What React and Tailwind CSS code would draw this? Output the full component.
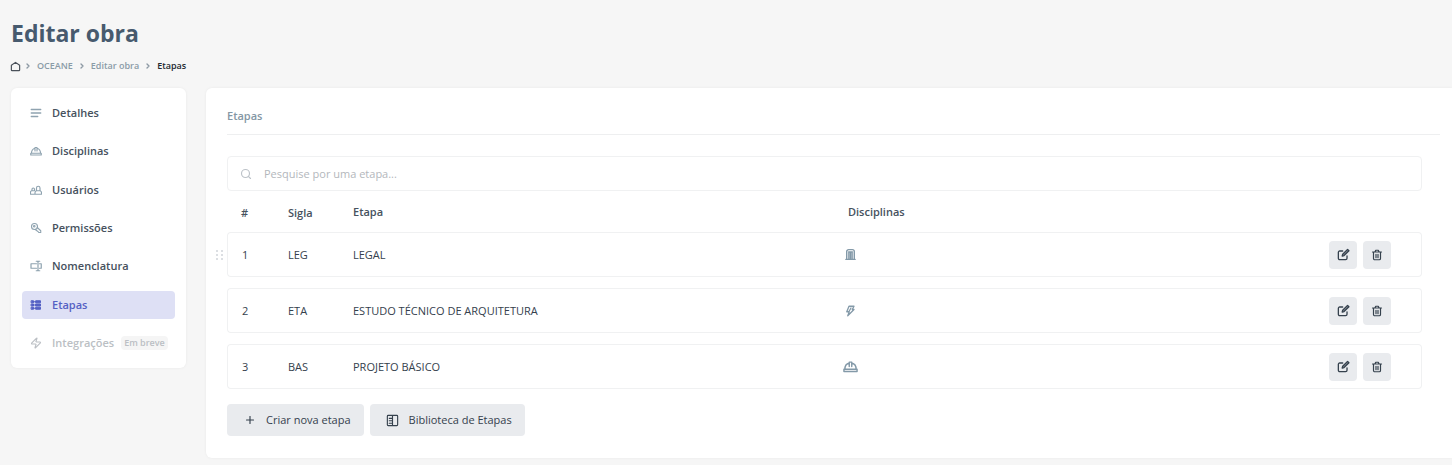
import React from "react";
import { ChevronRight, Search, Plus, Zap } from "lucide-react";

function Icon({ size = 12, width = 2, className = "", children }) {
  return (
    <svg
      width={size}
      height={size}
      viewBox="0 0 24 24"
      fill="none"
      stroke="currentColor"
      strokeWidth={width}
      strokeLinecap="round"
      strokeLinejoin="round"
      className={`shrink-0 ${className}`}
      aria-hidden="true"
    >
      {children}
    </svg>
  );
}

const HomeIcon = () => (
  <Icon size={11} width={2.6} className="text-[#4a515a]">
    <path d="M3 9.500 12 3l9 6.500v10a1.500 1.500 0 0 1-1.500 1.500h-15A1.500 1.500 0 0 1 3 19.500Z" />
  </Icon>
);

const LinesIcon = () => (
  <Icon width={2.6}>
    <path d="M2.500 5h19M2.500 12h19M2.500 19h13" />
  </Icon>
);

const HelmetIcon = ({ size = 12 }) => (
  <Icon size={size} width={2.3}>
    <path d="M1.500 16.500h21V20h-21zM3 16.500c0-5.500 3-9 7-10M21 16.500c0-5.500-3-9-7-10M10 12V5h4v7" />
  </Icon>
);

const UsersIcon = () => (
  <Icon width={2.3}>
    <path d="M10 20.500v-3a4 4 0 0 1 3-4h7a4 4 0 0 1 3 4v3ZM1 20.500V16a3 3 0 0 1 2.500-2.500H8M1 20.500h8" />
    <path d="M13 13V8a3.500 3.500 0 0 1 7 0v5" />
    <path d="M4 13v-2.500a2.500 2.500 0 0 1 5 0V13" />
  </Icon>
);

const KeyIcon = () => (
  <Icon width={2.2}>
    <circle cx="9" cy="9" r="6" />
    <circle cx="8.500" cy="8.500" r="1.500" />
    <path d="m14.500 11 7 6.500V21h-4L16 19l-1.500-1-4-3" />
  </Icon>
);

const RenameIcon = () => (
  <Icon width={2.4}>
    <path d="M13 7.500H2v9h11M19 7.500h3.500v9H19M12.500 2.500H15l1 1 1-1h2.500M12.500 21.500H15l1-1 1 1h2.500M16 3.500v17" />
  </Icon>
);

const StagesIcon = () => (
  <Icon width={2}>
    <path
      d="M3 3.500h4v4H3zM3 10h4v4H3zM3 16.500h4v4H3zM12 3.500h9v4h-9zM12 10h9v4h-9zM12 16.500h9v4h-9zM7 5.500h5M7 12h5M7 18.500h5"
      fill="currentColor"
    />
  </Icon>
);

const BuildingIcon = () => (
  <Icon size={13} width={2.6}>
    <path d="M5 20V6.500A3.500 3.500 0 0 1 8.500 3h7A3.500 3.500 0 0 1 19 6.500V20M3.500 21h17M9 20V9M15 20V9M12 20V9M8.500 7.500h7" />
  </Icon>
);

const BoltIcon = () => (
  <Icon size={12} width={2.6}>
    <path d="M10 2.500h10L16.500 9H20L7.500 21.500l3-8H5.500ZM14 6l-3.500 6" />
  </Icon>
);

const EditIcon = () => (
  <Icon size={13} width={2.4}>
    <path d="M10.500 5.500H5A2.500 2.500 0 0 0 2.500 8v11A2.500 2.500 0 0 0 5 21.500h11a2.500 2.500 0 0 0 2.500-2.500v-4.500" />
    <path d="m9.500 15 1-3.500 9-9 2.500 2.500-9 9Z" fill="currentColor" fillOpacity="0.5" />
  </Icon>
);

const TrashIcon = () => (
  <Icon size={12} width={2.4}>
    <path d="M3 6h18M8 5.500 9.500 2.500h5L16 5.500M5 6v13a2.500 2.500 0 0 0 2.500 2.500h9A2.500 2.500 0 0 0 19 19V6M10 10.500v7M14 10.500v7" />
  </Icon>
);

const LibraryIcon = () => (
  <Icon size={13} width={2.1}>
    <path d="M4 2.500h16A1.500 1.500 0 0 1 21.500 4v16a1.500 1.500 0 0 1-1.500 1.500H4A1.500 1.500 0 0 1 2.500 20V4A1.500 1.500 0 0 1 4 2.500ZM12 3v18M6 8h6M6 12.500h6M6 17h6" />
  </Icon>
);

const GripIcon = () => (
  <svg width="8" height="12" viewBox="0 0 8 12" fill="#dcdfe3" aria-hidden="true">
    {[1, 5, 9].map((y) => (
      <React.Fragment key={y}>
        <rect x="0" y={y} width="2" height="2" />
        <rect x="5" y={y} width="2" height="2" />
      </React.Fragment>
    ))}
  </svg>
);

const menu = [
  { label: "Detalhes", icon: <LinesIcon /> },
  { label: "Disciplinas", icon: <HelmetIcon /> },
  { label: "Usuários", icon: <UsersIcon /> },
  { label: "Permissões", icon: <KeyIcon /> },
  { label: "Nomenclatura", icon: <RenameIcon /> },
  { label: "Etapas", icon: <StagesIcon />, active: true },
];

const stages = [
  { code: "LEG", name: "LEGAL", icon: <BuildingIcon />, grip: true },
  { code: "ETA", name: "ESTUDO TÉCNICO DE ARQUITETURA", icon: <BoltIcon /> },
  { code: "BAS", name: "PROJETO BÁSICO", icon: <HelmetIcon size={15} /> },
];

function Separator() {
  return <ChevronRight size={8} strokeWidth={4} className="shrink-0 text-[#8d99a4]" aria-hidden="true" />;
}

function Breadcrumb() {
  return (
    <nav aria-label="Trilha" className="mt-[9px] flex h-4 items-center gap-[3px] pl-[10px] text-[9px] font-[550] text-[#8a9ba7]">
      <a href="#inicio" aria-label="Início"><HomeIcon /></a>
      <Separator />
      <a href="#oceane" className="px-[2px]">OCEANE</a>
      <Separator />
      <a href="#obra" className="px-[2px]">Editar obra</a>
      <Separator />
      <span aria-current="page" className="px-[2px] font-semibold text-[#22282f]">Etapas</span>
    </nav>
  );
}

function Sidebar() {
  return (
    <nav
      aria-label="Seções da obra"
      className="flex min-h-[280px] w-[175px] shrink-0 flex-col justify-between rounded-md bg-white px-[11px] py-[11px] font-[550] shadow-[0_0_3px_rgba(0,0,0,0.06)]"
    >
      {menu.map((m) => (
        <a
          key={m.label}
          href={"#" + m.label.toLowerCase()}
          aria-current={m.active ? "page" : undefined}
          className={
            m.active
              ? "flex h-7 items-center gap-[10px] rounded bg-[#dee0f5] px-2 text-[#5560c4]"
              : "flex h-7 items-center gap-[10px] rounded px-2 text-[#46515d]"
          }
        >
          <span className={m.active ? "text-[#5560c4]" : "text-[#8fa3b0]"}>{m.icon}</span>
          {m.label}
        </a>
      ))}
      <div className="flex h-7 items-center gap-[10px] px-2 text-[#bbbfc4]">
        <Zap size={12} strokeWidth={2.3} className="shrink-0" aria-hidden="true" />
        Integrações
        <span className="-ml-[3px] rounded-sm bg-[#f5f5f5] px-[3px] text-[9px] leading-[14px] whitespace-nowrap">Em breve</span>
      </div>
    </nav>
  );
}

function StageTable() {
  const cell = "h-[45px] border-y border-[#f0f1f2] p-0";
  return (
    <table className="-mb-[11px] w-full table-fixed border-separate border-spacing-x-0 border-spacing-y-[11px] text-left font-medium text-[#35414d]">
      <colgroup>
        <col className="w-[61px]" />
        <col className="w-[65px]" />
        <col className="w-[41%]" />
        <col />
        <col className="w-[93px]" />
      </colgroup>
      <thead className="text-[#46525e]">
        <tr>
          <th scope="col" className="p-0 pt-[3px] pl-[14px] font-[550]">#</th>
          <th scope="col" className="p-0 pt-[3px] font-[550]">Sigla</th>
          <th scope="col" className="p-0 font-[550]">Etapa</th>
          <th scope="col" className="p-0 pl-[5px] font-[550]">Disciplinas</th>
          <th scope="col" aria-label="Ações" className="p-0" />
        </tr>
      </thead>
      <tbody>
        {stages.map((s, i) => (
          <tr key={s.code}>
            <td className={`${cell} relative rounded-l border-l pl-[14px]`}>
              {s.grip && (
                <button type="button" aria-label="Reordenar etapa" className="absolute top-4 -left-3">
                  <GripIcon />
                </button>
              )}
              {i + 1}
            </td>
            <td className={cell}>{s.code}</td>
            <td className={cell}>{s.name}</td>
            <td className={`${cell} text-[#8399a8]`}>
              <span className="flex w-[15px] justify-center">{s.icon}</span>
            </td>
            <td className={`${cell} rounded-r border-r`}>
              <div className="flex gap-[6px]">
                <button type="button" aria-label={"Editar " + s.name} className="flex size-7 items-center justify-center rounded bg-[#e9ebee]">
                  <EditIcon />
                </button>
                <button type="button" aria-label={"Excluir " + s.name} className="flex size-7 items-center justify-center rounded bg-[#e9ebee]">
                  <TrashIcon />
                </button>
              </div>
            </td>
          </tr>
        ))}
      </tbody>
    </table>
  );
}

export default function App() {
  return (
    <div className="min-h-screen bg-[#f6f6f6] font-['Open_Sans','Noto_Sans',sans-serif] text-[11px] leading-4">
      <header className="pt-[17px]">
        <h1 className="pl-[11px] text-[23px] leading-8 font-bold text-[#475a6e]">Editar obra</h1>
        <Breadcrumb />
      </header>
      <div className="mt-[14px] flex items-start gap-5 pb-[7px] pl-[11px]">
        <Sidebar />
        <main className="min-w-0 flex-1 rounded-l-md bg-white pt-5 pb-[22px] pl-[21px] shadow-[0_0_3px_rgba(0,0,0,0.06)]">
          <h2 className="mr-3 border-b border-[#eeeff0] pb-[10px] font-[550] text-[#8497a5]">Etapas</h2>
          <div className="mt-[21px] mr-[30px]">
            <label className="flex h-[35px] items-center gap-3 rounded border border-[#f0f1f2] px-3 text-[#bcc2c8]">
              <Search size={12} strokeWidth={2.3} className="shrink-0" aria-hidden="true" />
              <input
                type="text"
                aria-label="Pesquisar etapa"
                placeholder="Pesquise por uma etapa..."
                className="min-w-0 flex-1 bg-transparent font-medium text-[#3a4652] outline-none placeholder:text-[#b3b7bc]"
              />
            </label>
            <StageTable />
            <div className="mt-[15px] flex gap-[6px] font-medium text-[#35414d]">
              <button type="button" className="flex h-8 items-center gap-[10px] rounded bg-[#e9ebee] pr-[13px] pl-[17px]">
                <Plus size={12} strokeWidth={2.3} aria-hidden="true" />
                Criar nova etapa
              </button>
              <button type="button" className="flex h-8 items-center gap-[10px] rounded bg-[#e9ebee] pr-[13px] pl-4">
                <LibraryIcon />
                Biblioteca de Etapas
              </button>
            </div>
          </div>
        </main>
      </div>
    </div>
  );
}
